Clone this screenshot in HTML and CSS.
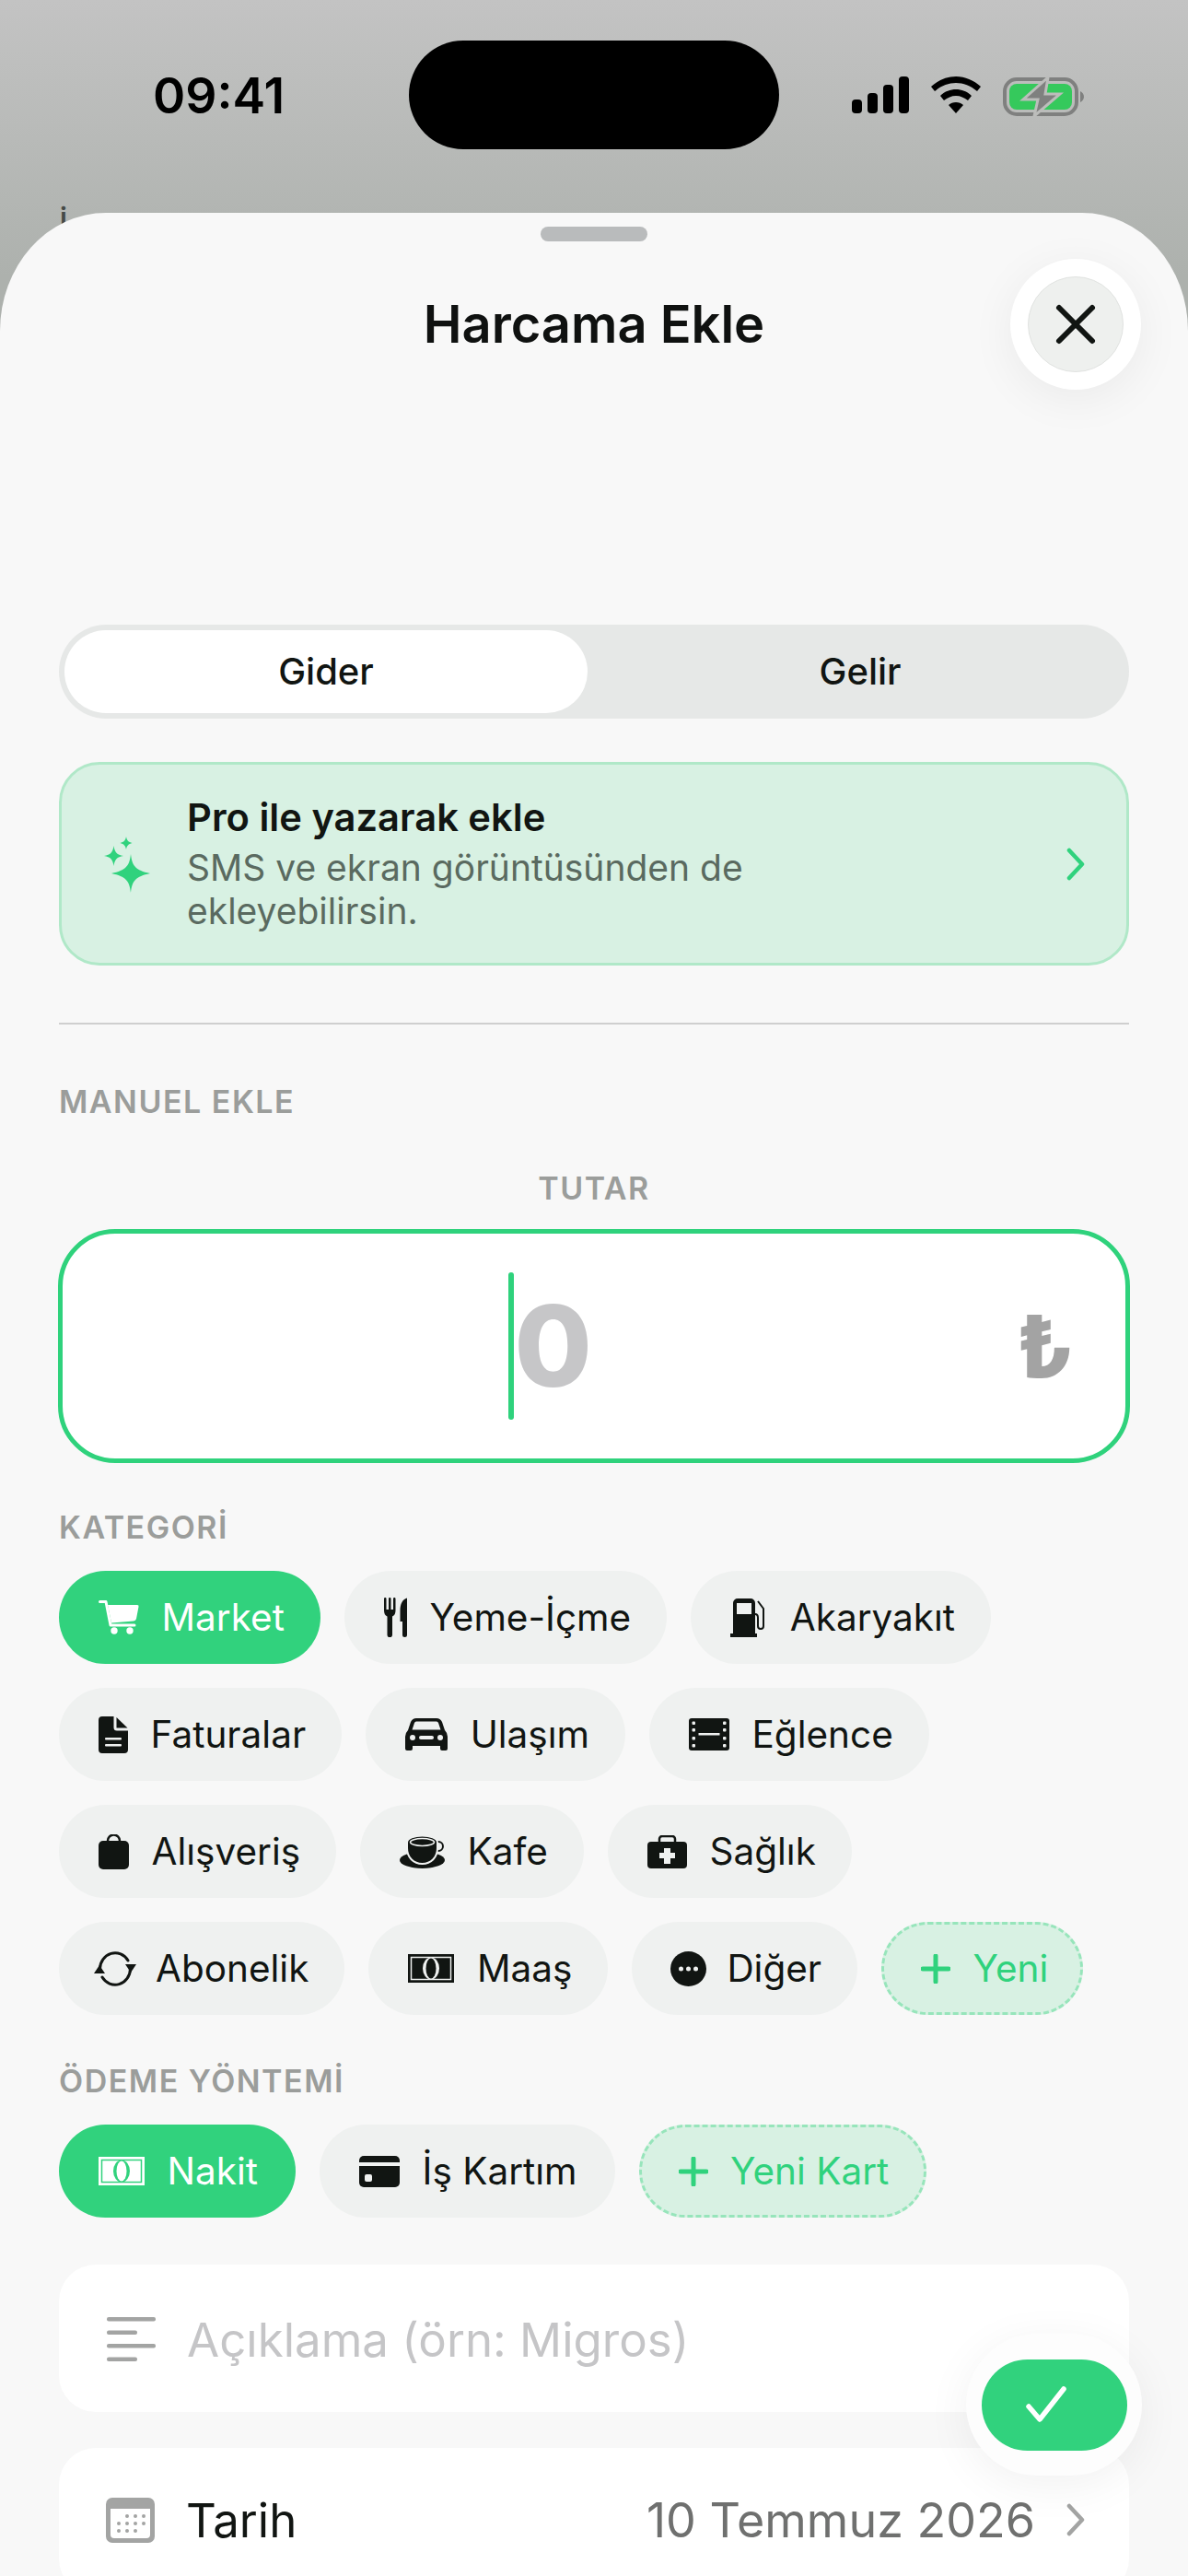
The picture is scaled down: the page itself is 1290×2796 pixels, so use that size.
FILE: index.html
```html
<!DOCTYPE html>
<html lang="tr">
<head>
    <meta charset="UTF-8">
    <meta name="viewport" content="width=device-width, initial-scale=1.0">
    <title>Harcama Ekle</title>
    <link rel="stylesheet" href="styles.css">
</head>
<body>
    <div class="screen">
        <div class="status-bar">
            <div class="time">09:41</div>
            <div class="island"></div>
            <div class="status-icons">
                <svg width="62" height="40" viewBox="0 0 62 40"><rect x="0" y="25" width="11" height="15" rx="4"/><rect x="17" y="18" width="11" height="22" rx="4"/><rect x="34" y="9" width="11" height="31" rx="4"/><rect x="51" y="0" width="11" height="40" rx="4"/></svg>
                <svg width="54" height="40" viewBox="0 0 54 40"><path d="M27 0C37 0 46 4 54 11L50 16C43 10 35 7 27 7S11 10 4 16L0 11C8 4 17 0 27 0Z"/><path d="M27 14C33 14 39 16 44 21L40 26C36 23 32 21 27 21S18 23 14 26L10 21C15 16 21 14 27 14Z"/><path d="M27 28C30 28 33 29 35 31L27 40L19 31C21 29 24 28 27 28Z"/></svg>
                <svg width="88" height="44" viewBox="0 0 88 44"><rect x="2" y="3" width="78" height="38" rx="13" fill="none" stroke="#7f807f" stroke-width="4"/><rect x="7" y="8" width="68" height="28" rx="8" fill="#35c95c"/><path d="M84 16c2 1 4 3 4 6s-2 5-4 6Z" fill="#7f807f"/><path d="M49 1L22 25H38L34 43L62 19H46Z" fill="#7f807f" stroke="#bcbdbb" stroke-width="3"/></svg>
            </div>
        </div>
        <div class="behind-mark">i</div>

        <div class="sheet">
            <div class="grabber"></div>
            <h1 class="sheet-title">Harcama Ekle</h1>
            <button class="close-btn">
                <span class="close-inner">
                    <svg width="46" height="46" viewBox="0 0 46 46"><path d="M5 5L41 41M41 5L5 41" fill="none" stroke="#111512" stroke-width="6" stroke-linecap="round"/></svg>
                </span>
            </button>

            <div class="segment">
                <div class="segment-item active">Gider</div>
                <div class="segment-item">Gelir</div>
            </div>

            <div class="pro-card">
                <svg class="sparkles" width="50" height="61" viewBox="0 0 50 61"><path d="M29 19C30.500 32 34 36.500 50 40C34 43.500 30.500 48 29 61C27.500 48 24 43.500 8 40C24 36.500 27.500 32 29 19Z"/><path d="M10.500 10C11.500 17 14 20 21 21C14 22 11.500 25 10.500 32C9.500 25 7 22 0 21C7 20 9.500 17 10.500 10Z"/><path d="M24 0C24.700 4 26.500 6 30.500 7C26.500 8 24.700 10 24 14C23.300 10 21.500 8 17.500 7C21.500 6 23.300 4 24 0Z"/></svg>
                <div class="pro-text">
                    <div class="pro-title">Pro ile yazarak ekle</div>
                    <div class="pro-sub">SMS ve ekran görüntüsünden de ekleyebilirsin.</div>
                </div>
                <svg class="chevron green" width="20" height="36" viewBox="0 0 20 36"><path d="M3 3L17 18L3 33" fill="none" stroke="currentColor" stroke-width="4.500" stroke-linecap="round" stroke-linejoin="round"/></svg>
            </div>

            <div class="divider"></div>

            <div class="section-label manual">MANUEL EKLE</div>
            <div class="section-label tutar">TUTAR</div>

            <div class="amount-box">
                <div class="amount-value">
                    <span class="caret"></span>
                    <span class="amount-zero">0</span>
                </div>
                <div class="currency">₺</div>
            </div>

            <div class="section-label kategori">KATEGORİ</div>
            <div class="chips">
                <div class="chip selected">
                    <svg width="44" height="37" viewBox="0 0 44 37"><path d="M1.500 1.500H8L13 27H39" fill="none" stroke="currentColor" stroke-width="3" stroke-linecap="round" stroke-linejoin="round"/><path d="M10 5H42Q44 5 43.500 7L41 20Q40.500 22 38 22.500L14 24.500Z"/><circle cx="17" cy="33" r="3.700"/><circle cx="34" cy="33" r="3.700"/></svg>
                    <span>Market</span>
                </div>
                <div class="chip">
                    <svg width="25" height="43" viewBox="0 0 25 43"><path d="M0 1.200a1.200 1.200 0 0 1 2.500 0V13H5V1.200a1.200 1.200 0 0 1 2.500 0V13H10V1.200a1.200 1.200 0 0 1 2.500 0V14Q12.500 19 9 20.500V40.500a2.700 2.700 0 0 1-5.500 0V20.500Q0 19 0 14Z"/><path d="M25 0.500V40.500a2.500 2.500 0 0 1-5 0V26H17.500V14C17.500 7 20 2 25 0.500Z"/></svg>
                    <span>Yeme-İçme</span>
                </div>
                <div class="chip">
                    <svg width="40" height="42" viewBox="0 0 40 42"><path fill-rule="evenodd" d="M3 5a5 5 0 0 1 5-5H22a5 5 0 0 1 5 5V38H29V42H0V38H3ZM7 5V17H23V5Z"/><path d="M30 3L36 11V30a3 3 0 0 1-6 0V21Q30 17 27 17" fill="none" stroke="currentColor" stroke-width="2"/></svg>
                    <span>Akaryakıt</span>
                </div>
                <div class="chip">
                    <svg width="32" height="40" viewBox="0 0 32 40"><path d="M4 0H16.500V12a3.500 3.500 0 0 0 3.500 3.500H32V36a4 4 0 0 1-4 4H4a4 4 0 0 1-4-4V4A4 4 0 0 1 4 0Z"/><path d="M19.500 1L31.500 12.500H19.500Z"/><rect class="cut" x="7" y="23" width="18" height="2.500" rx="1"/><rect class="cut" x="7" y="30" width="18" height="2.500" rx="1"/></svg>
                    <span>Faturalar</span>
                </div>
                <div class="chip">
                    <svg width="46" height="35" viewBox="0 0 46 35"><path fill-rule="evenodd" d="M12 0H34Q38 0 40 4L43 13Q46 16 46 20V33a2 2 0 0 1-2 2H40a2 2 0 0 1-2-2V30H8V33a2 2 0 0 1-2 2H2a2 2 0 0 1-2-2V20Q0 16 3 13L6 4Q8 0 12 0ZM12 3.500Q10.500 3.500 10 5L7.500 12.500H38.500L36 5Q35.500 3.500 34 3.500Z"/><circle class="cut" cx="8" cy="21" r="3"/><circle class="cut" cx="38" cy="21" r="3"/><rect class="cut" x="15" y="19" width="16" height="4" rx="2"/></svg>
                    <span>Ulaşım</span>
                </div>
                <div class="chip">
                    <svg width="44" height="35" viewBox="0 0 44 35"><rect width="44" height="35" rx="3"/><g class="cut"><rect x="3.500" y="3.500" width="3.500" height="3.500" rx="1"/><rect x="3.500" y="11" width="3.500" height="3.500" rx="1"/><rect x="3.500" y="20" width="3.500" height="3.500" rx="1"/><rect x="3.500" y="28" width="3.500" height="3.500" rx="1"/><rect x="37" y="3.500" width="3.500" height="3.500" rx="1"/><rect x="37" y="11" width="3.500" height="3.500" rx="1"/><rect x="37" y="20" width="3.500" height="3.500" rx="1"/><rect x="37" y="28" width="3.500" height="3.500" rx="1"/><rect x="10.500" y="16" width="23" height="2.500"/></g></svg>
                    <span>Eğlence</span>
                </div>
                <div class="chip">
                    <svg width="33" height="38" viewBox="0 0 33 38"><path d="M10 8V7a6.500 6.500 0 0 1 13 0V8" fill="none" stroke="currentColor" stroke-width="2.500"/><rect y="7" width="33" height="31" rx="5"/></svg>
                    <span>Alışveriş</span>
                </div>
                <div class="chip">
                    <svg width="49" height="36" viewBox="0 0 49 36"><ellipse cx="24.500" cy="27" rx="24.500" ry="9"/><circle cx="42" cy="12" r="5" fill="none" stroke="currentColor" stroke-width="2"/><path d="M8 8C8 -2 41 -2 41 8V14C41 24 34 31 24.500 31S8 24 8 14Z" stroke="var(--chip-bg)" stroke-width="2"/><ellipse cx="24.500" cy="7.500" rx="13" ry="4" fill="none" stroke="var(--chip-bg)" stroke-width="1.500"/></svg>
                    <span>Kafe</span>
                </div>
                <div class="chip">
                    <svg width="43" height="36" viewBox="0 0 43 36"><path d="M13 8V4a3 3 0 0 1 3-3H27a3 3 0 0 1 3 3V8" fill="none" stroke="currentColor" stroke-width="2.500"/><rect y="7" width="43" height="29" rx="4"/><path class="cut" d="M18 14H25V19H30V25H25V31H18V25H13V19H18Z"/></svg>
                    <span>Sağlık</span>
                </div>
                <div class="chip tight-icon">
                    <svg width="46" height="38" viewBox="0 0 46 38"><path d="M6.500 19A16.500 17.500 0 0 1 37 10" fill="none" stroke="currentColor" stroke-width="3" stroke-linecap="round"/><path d="M39.500 19A16.500 17.500 0 0 1 9 28" fill="none" stroke="currentColor" stroke-width="3" stroke-linecap="round"/><path d="M34 14H46L40 23Z"/><path d="M0 24H12L6 15Z"/></svg>
                    <span>Abonelik</span>
                </div>
                <div class="chip">
                    <svg class="cash-icon" width="50" height="31" viewBox="0 0 50 31"><rect width="50" height="31"/><rect class="cash-line" x="3.500" y="3.500" width="43" height="24" fill="none" stroke-width="1.500"/><ellipse class="cut" cx="25" cy="15.500" rx="9" ry="12"/><ellipse cx="25" cy="15.500" rx="5.500" ry="11"/></svg>
                    <span>Maaş</span>
                </div>
                <div class="chip other">
                    <svg width="39" height="38" viewBox="0 0 39 38"><ellipse cx="19.500" cy="19" rx="19.500" ry="19"/><circle class="cut" cx="11.500" cy="19" r="2.500"/><circle class="cut" cx="19.500" cy="19" r="2.500"/><circle class="cut" cx="27.500" cy="19" r="2.500"/></svg>
                    <span>Diğer</span>
                </div>
                <div class="chip add-chip">
                    <svg width="32" height="32" viewBox="0 0 32 32"><path d="M16 2V30M2 16H30" fill="none" stroke="currentColor" stroke-width="5" stroke-linecap="round"/></svg>
                    <span>Yeni</span>
                </div>
            </div>

            <div class="section-label odeme">ÖDEME YÖNTEMİ</div>
            <div class="chips pay-chips">
                <div class="chip selected">
                    <svg class="cash-icon" width="50" height="31" viewBox="0 0 50 31"><rect width="50" height="31"/><rect class="cash-line" x="3.500" y="3.500" width="43" height="24" fill="none" stroke-width="1.500"/><ellipse class="cut" cx="25" cy="15.500" rx="9" ry="12"/><ellipse cx="25" cy="15.500" rx="5.500" ry="11"/></svg>
                    <span>Nakit</span>
                </div>
                <div class="chip">
                    <svg width="44" height="34" viewBox="0 0 44 34"><path d="M5 0H39a5 5 0 0 1 5 5V7H0V5A5 5 0 0 1 5 0Z"/><path d="M0 11H44V29a5 5 0 0 1-5 5H5a5 5 0 0 1-5-5Z"/><rect class="cut" x="6" y="20" width="8" height="8" rx="2"/></svg>
                    <span>İş Kartım</span>
                </div>
                <div class="chip add-chip">
                    <svg width="32" height="32" viewBox="0 0 32 32"><path d="M16 2V30M2 16H30" fill="none" stroke="currentColor" stroke-width="5" stroke-linecap="round"/></svg>
                    <span>Yeni Kart</span>
                </div>
            </div>

            <div class="row-card desc-card">
                <svg class="row-icon" width="53" height="48" viewBox="0 0 53 48"><rect width="53" height="4.500" rx="2"/><rect y="14.500" width="33" height="4.500" rx="2"/><rect y="29" width="53" height="4.500" rx="2"/><rect y="43.500" width="33" height="4.500" rx="2"/></svg>
                <span class="placeholder">Açıklama (örn: Migros)</span>
            </div>

            <div class="row-card date-card">
                <svg class="row-icon" width="53" height="49" viewBox="0 0 53 49"><rect width="53" height="49" rx="7" fill="#a3a4a3"/><path d="M5 12H48V40a4 4 0 0 1-4 4H9a4 4 0 0 1-4-4Z" fill="#fff"/><g fill="#a3a4a3"><circle cx="23" cy="20" r="2"/><circle cx="32" cy="20" r="2"/><circle cx="41" cy="20" r="2"/><circle cx="14" cy="28" r="2"/><circle cx="23" cy="28" r="2"/><circle cx="32" cy="28" r="2"/><circle cx="41" cy="28" r="2"/><circle cx="14" cy="36" r="2"/><circle cx="23" cy="36" r="2"/><circle cx="32" cy="36" r="2"/></g></svg>
                <span class="row-label">Tarih</span>
                <span class="row-value">10 Temmuz 2026</span>
                <svg class="chevron grey" width="20" height="36" viewBox="0 0 20 36"><path d="M3 3L17 18L3 33" fill="none" stroke="currentColor" stroke-width="4.500" stroke-linecap="round" stroke-linejoin="round"/></svg>
            </div>

            <button class="fab">
                <span class="fab-inner">
                    <svg width="44" height="40" viewBox="0 0 44 40"><path d="M3 22L15 36L41 3" fill="none" stroke="#fff" stroke-width="5.500" stroke-linecap="round" stroke-linejoin="round"/></svg>
                </span>
            </button>
        </div>
    </div>
</body>
</html>
```

FILE: styles.css
```css
* {
    margin: 0;
    padding: 0;
    box-sizing: border-box;
}

body {
    font-family: 'Inter', 'Liberation Sans', sans-serif;
    color: #111512;
    background: #f8f8f8;
    overflow: hidden;
}

.screen {
    position: relative;
    width: 1290px;
    height: 2796px;
    overflow: hidden;
    background: linear-gradient(180deg, #c3c3c3 0, #adb1ad 300px);
}

/* status bar */
.status-bar {
    display: grid;
    grid-template-columns: 444px 402px 1fr;
    height: 231px;
    padding-top: 44px;
}

.time {
    padding: 30px 0 0 166px;
    font-size: 53.500px;
    font-weight: 600;
    line-height: 60px;
    color: #000;
}

.island {
    height: 118px;
    border-radius: 59px;
    background: #000;
}

.status-icons {
    display: flex;
    justify-content: flex-end;
    align-items: flex-start;
    gap: 24px;
    padding: 39px 113px 0 0;
}

.behind-mark {
    position: absolute;
    left: 65px;
    top: 218px;
    font-size: 30px;
    line-height: 36px;
    font-weight: 600;
    color: #454a47;
}

/* sheet */
.sheet {
    position: relative;
    height: 2565px;
    padding: 15px 64px 0;
    background: #f8f8f8;
    border-radius: 115px 115px 0 0 / 128px 128px 0 0;
    overflow: hidden;
}

.grabber {
    width: 116px;
    height: 16px;
    margin: 0 auto;
    border-radius: 8px;
    background: #b9bbbc;
}

.sheet-title {
    margin-top: 58px;
    font-size: 56px;
    font-weight: 600;
    line-height: 64px;
    text-align: center;
    color: #0f1110;
}

.close-btn {
    position: absolute;
    left: 1097px;
    top: 50px;
    display: flex;
    align-items: center;
    justify-content: center;
    width: 142px;
    height: 142px;
    border: none;
    border-radius: 50%;
    background: #fff;
    box-shadow: 0 10px 50px rgba(0,0,0,0.06);
}

.close-inner {
    display: flex;
    align-items: center;
    justify-content: center;
    width: 104px;
    height: 104px;
    border: 1px solid #e1e3e1;
    border-radius: 50%;
    background: #eef0ee;
}

/* gider / gelir */
.segment {
    display: flex;
    height: 102px;
    margin-top: 294px;
    padding: 6px;
    border-radius: 51px;
    background: #e6e8e7;
}

.segment-item {
    flex: 1;
    display: flex;
    align-items: center;
    justify-content: center;
    padding: 0 0 2px 10px;
    font-size: 40px;
    font-weight: 500;
}

.segment-item.active {
    flex: 0 0 568px;
    padding-left: 0;
    border-radius: 45px;
    background: #fff;
}

/* pro card */
.pro-card {
    display: flex;
    align-items: center;
    height: 221px;
    margin-top: 47px;
    padding: 0 45px 0 46px;
    border: 3px solid #b0e8c8;
    border-radius: 44px;
    background: #d8f1e3;
}

.sparkles {
    flex-shrink: 0;
    fill: #30d27d;
    margin-top: 2px;
}

.pro-text {
    flex: 1;
    margin-left: 40px;
    margin-top: -2px;
}

.pro-title {
    font-size: 41.700px;
    font-weight: 600;
    line-height: 52px;
}

.pro-sub {
    max-width: 760px;
    margin-top: 5px;
    font-size: 39px;
    line-height: 47px;
    color: #5a6a60;
}

.chevron {
    flex-shrink: 0;
}

.chevron.green {
    color: #30d27d;
}

.chevron.grey {
    color: #a3a4a3;
}

.divider {
    height: 2px;
    margin-top: 62px;
    background: #cfcfcf;
}

/* labels */
.section-label {
    font-size: 34px;
    font-weight: 600;
    line-height: 40px;
    letter-spacing: 1.500px;
    color: #9b9d9b;
}

.section-label.manual {
    margin-top: 64px;
}

.section-label.tutar {
    margin-top: 54px;
    text-align: center;
}

.section-label.kategori {
    margin-top: 50px;
}

.section-label.odeme {
    margin-top: 52px;
}

/* amount */
.amount-box {
    display: flex;
    align-items: center;
    height: 254px;
    margin: 24px -1px 0;
    padding: 0 56px 0 23px;
    border: 5px solid #2fd27c;
    border-radius: 62px;
    background: #fff;
}

.amount-value {
    flex: 1;
    display: flex;
    align-items: center;
    justify-content: center;
}

.caret {
    width: 6px;
    height: 160px;
    margin-right: 1px;
    border-radius: 3px;
    background: #2fd27c;
}

.amount-zero {
    font-size: 122px;
    font-weight: 800;
    line-height: 160px;
    color: #c6c6c8;
}

.currency {
    font-size: 94px;
    font-weight: 800;
    line-height: 100px;
    color: #a3a3a3;
}

/* chips */
.chips {
    display: flex;
    flex-wrap: wrap;
    gap: 26px;
    margin-top: 27px;
}

.chip {
    --chip-bg: #eff1f0;
    display: flex;
    align-items: center;
    gap: 24.500px;
    height: 101px;
    padding: 0 39px 0 43px;
    border-radius: 51px;
    background: var(--chip-bg);
    font-size: 40.500px;
    line-height: 50px;
    color: #111512;
}

.chip svg {
    flex-shrink: 0;
    fill: currentColor;
}

.chip .cut {
    fill: var(--chip-bg);
}

.chip .cash-line {
    stroke: var(--chip-bg);
}

.chip.tight-icon {
    gap: 21px;
    padding-left: 38px;
}

.chip.other {
    gap: 22px;
    padding-left: 42px;
}

.chip.selected {
    --chip-bg: #31d27d;
    color: #fff;
}

.chip.add-chip {
    --chip-bg: #d8f1e3;
    padding: 0 35px 0 40px;
    border: 3px dashed #97e5bb;
    color: #30d27d;
}

.pay-chips .chip {
    padding-right: 41px;
}

.pay-chips .chip.add-chip {
    padding-right: 38px;
}

/* rows */
.row-card {
    display: flex;
    align-items: center;
    height: 160px;
    padding: 0 48px 0 52px;
    border-radius: 40px;
    background: #fff;
}

.desc-card {
    margin-top: 51px;
    padding-top: 2px;
}

.date-card {
    margin-top: 39px;
    padding-bottom: 4px;
    padding-left: 51px;
}

.row-icon {
    flex-shrink: 0;
    fill: #a3a4a3;
    margin-right: 34px;
}

.placeholder {
    font-size: 51px;
    color: #c5c5c7;
}

.row-label {
    flex: 1;
    font-size: 51px;
}

.row-value {
    margin-right: 34px;
    font-size: 52px;
    color: #6f706f;
}

/* confirm button */
.fab {
    position: absolute;
    left: 1049px;
    top: 2302px;
    display: flex;
    align-items: center;
    justify-content: center;
    width: 191px;
    height: 154px;
    border: none;
    border-radius: 77px;
    background: #fdfdfd;
    box-shadow: 0 10px 50px rgba(0,0,0,0.06);
}

.fab-inner {
    display: flex;
    align-items: center;
    justify-content: center;
    width: 158px;
    height: 99px;
    padding-right: 18px;
    border-radius: 50px;
    background: #31d27d;
}
```
